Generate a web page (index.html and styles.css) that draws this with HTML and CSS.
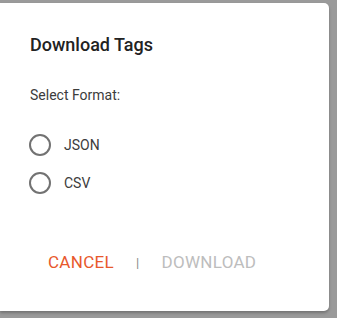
FILE: index.html
```html
<!DOCTYPE html>
<html>
<head>
<meta charset="utf-8">
<link rel="stylesheet" href="styles.css">
</head>
<body>
<div class="dialog">
  <h2 class="title">Download Tags</h2>
  <div class="label">Select Format:</div>
  <div class="options">
    <label class="option"><span class="radio"></span><span class="opt-text">JSON</span></label>
    <label class="option"><span class="radio"></span><span class="opt-text">CSV</span></label>
  </div>
  <div class="actions">
    <span class="btn cancel">CANCEL</span>
    <span class="sep">|</span>
    <span class="btn download">DOWNLOAD</span>
  </div>
</div>
</body>
</html>
```

FILE: styles.css
```css
html, body {
  margin: 0;
  padding: 0;
}
body {
  background: #9a9a9a;
  width: 337px;
  height: 318px;
  overflow: hidden;
  font-family: Roboto, "Noto Sans", sans-serif;
}
.dialog {
  box-sizing: border-box;
  width: 329px;
  height: 308px;
  margin-top: 3px;
  background: #fff;
  border-radius: 0 5px 5px 0;
  padding: 30px 0 0 30px;
  box-shadow: 0 2px 3px rgba(0,0,0,0.25);
}
.title {
  margin: 0;
  font-size: 18px;
  line-height: 24px;
  font-weight: 500;
  color: #222;
}
.label {
  margin-top: 28px;
  font-size: 14px;
  line-height: 20px;
  color: #3c3c3c;
}
.options {
  margin-top: 29px;
  display: flex;
  flex-direction: column;
  gap: 16px;
}
.option {
  display: flex;
  align-items: center;
  height: 22px;
}
.radio {
  box-sizing: border-box;
  width: 22px;
  height: 22px;
  border: 2px solid #727272;
  border-radius: 50%;
  margin-left: -1px;
}
.opt-text {
  margin-left: 13px;
  font-size: 14px;
  color: #3c3c3c;
}
.actions {
  margin-top: 57px;
  padding-left: 18px;
  display: flex;
  align-items: center;
  font-size: 17px;
  line-height: 20px;
  letter-spacing: 0.3px;
}
.cancel {
  color: #e8582c;
}
.sep {
  color: #888;
  font-size: 13px;
  margin-left: 22px;
  margin-right: 22px;
  padding-top: 2px;
}
.download {
  color: #bdbdbd;
}
```
